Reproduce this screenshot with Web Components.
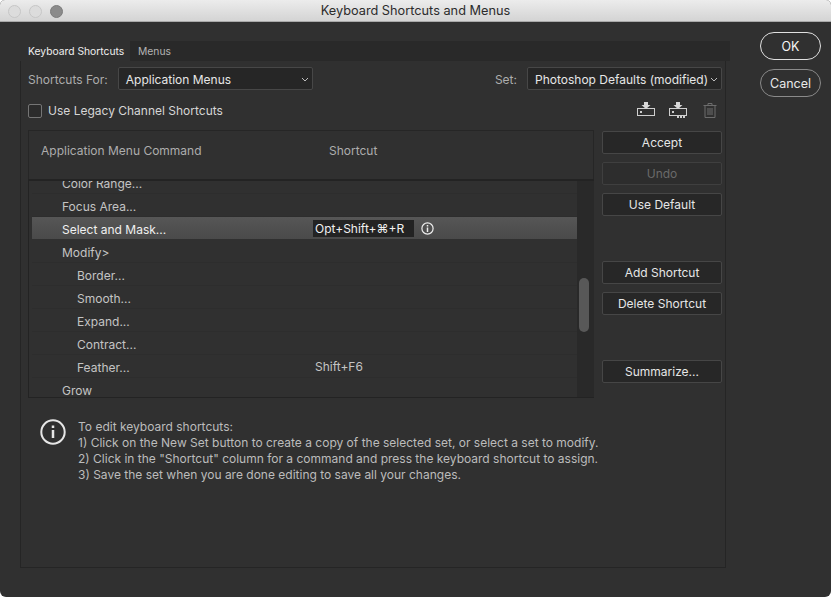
<!DOCTYPE html>
<html>
<head>
<meta charset="utf-8">
<title>Keyboard Shortcuts and Menus</title>
<style>
html, body { margin: 0; height: 100%; background: #fff; }
body { font: 12px Inter, "Liberation Sans", "Noto Sans", sans-serif; overflow: hidden; }
</style>
</head>
<body>
<ps-window heading="Keyboard Shortcuts and Menus">
  <ps-panel>
    <ps-tabs slot="tabs"></ps-tabs>
    <div slot="top">
      <ps-select label="Shortcuts For:" value="Application Menus" width="195"></ps-select>
      <ps-select label="Set:" value="Photoshop Defaults (modified)" width="195"></ps-select>
    </div>
    <ps-checkbox slot="legacy">Use Legacy Channel Shortcuts</ps-checkbox>
    <ps-toolicons slot="legacy"></ps-toolicons>
    <shortcut-table slot="table">
      <shortcut-row>Color Range...</shortcut-row>
      <shortcut-row>Focus Area...</shortcut-row>
      <shortcut-row selected keys="Opt+Shift+⌘+R">Select and Mask...</shortcut-row>
      <shortcut-row>Modify&gt;</shortcut-row>
      <shortcut-row indent>Border...</shortcut-row>
      <shortcut-row indent>Smooth...</shortcut-row>
      <shortcut-row indent>Expand...</shortcut-row>
      <shortcut-row indent>Contract...</shortcut-row>
      <shortcut-row indent keys="Shift+F6">Feather...</shortcut-row>
      <shortcut-row>Grow</shortcut-row>
    </shortcut-table>
    <ps-button slot="side">Accept</ps-button>
    <ps-button slot="side" disabled>Undo</ps-button>
    <ps-button slot="side">Use Default</ps-button>
    <ps-button slot="side" style="margin-top:37px">Add Shortcut</ps-button>
    <ps-button slot="side">Delete Shortcut</ps-button>
    <ps-button slot="side" style="margin-top:37px">Summarize...</ps-button>
    <info-note slot="note">
      <div>To edit keyboard shortcuts:</div>
      <div>1) Click on the New Set button to create a copy of the selected set, or select a set to modify.</div>
      <div>2) Click in the "Shortcut" column for a command and press the keyboard shortcut to assign.</div>
      <div>3) Save the set when you are done editing to save all your changes.</div>
    </info-note>
  </ps-panel>
  <ps-pill slot="actions" primary>OK</ps-pill>
  <ps-pill slot="actions">Cancel</ps-pill>
</ps-window>

<script>
function define(name, css, html, init) {
  customElements.define(name, class extends HTMLElement {
    constructor() {
      super();
      this.attachShadow({ mode: 'open' }).innerHTML = `<style>${css}</style>${html}`;
    }
    connectedCallback() {
      if (init) init(this, this.shadowRoot);
    }
  });
}

define('ps-window', `
  :host { display: flex; flex-direction: column; width: 831px; height: 597px; background: #303030;
    border-radius: 5px 5px 6px 6px; overflow: hidden; }
  .bar { flex: none; height: 21px; display: flex; align-items: center; position: relative; justify-content: center;
    background: linear-gradient(#ececec, #d4d4d4); border-bottom: 1px solid #a9a9a9; color: #2c2c2c; font-size: 12.75px; }
  .lights { position: absolute; left: 8px; top: 5px; display: flex; gap: 8px; }
  .lights i { width: 11px; height: 11px; border-radius: 50%; background: #dcdcdc; border: .5px solid #c6c6c6; }
  .lights i:last-child { background: #8b8b8b; border-color: #7c7c7c; }
  .body { flex: 1; display: flex; padding: 10px 10px 0 20px; }
  .actions { display: flex; flex-direction: column; gap: 9px; margin: 0 0 0 30px; width: 61px; }
`, `
  <div class="bar"><div class="lights"><i></i><i></i><i></i></div><span id="t"></span></div>
  <div class="body"><slot></slot><div class="actions"><slot name="actions"></slot></div></div>
`, (el, root) => { root.getElementById('t').textContent = el.getAttribute('heading'); });

define('ps-panel', `
  :host { display: block; width: 710px; height: 535px; margin-top: 9px; }
  .frame { width: 706px; height: 507px; border: solid #252525; border-width: 0 1px 1px 1px; padding: 6px 0 0 7px; box-sizing: border-box; }
  .top ::slotted(div) { display: flex; justify-content: space-between; padding: 0 3px 0 0; }
  .legacy { display: flex; justify-content: space-between; align-items: center; height: 23px; margin-top: 9px; padding-right: 3px; }
  .main { display: flex; gap: 8px; margin-top: 8px; }
  .side { width: 120px; display: flex; flex-direction: column; gap: 8px; padding-top: 1px; }
  .note { margin-top: 21px; }
`, `
  <slot name="tabs"></slot>
  <div class="frame">
    <div class="top"><slot name="top"></slot></div>
    <div class="legacy"><slot name="legacy"></slot></div>
    <div class="main"><slot name="table"></slot><div class="side"><slot name="side"></slot></div></div>
    <div class="note"><slot name="note"></slot></div>
  </div>
`);

define('ps-tabs', `
  :host { display: flex; height: 20px; background: #292929; font-size: 10.3px; line-height: 20px; white-space: nowrap; }
  span { padding: 0 8px; color: #b4b4b4; }
  .on { width: 110px; box-sizing: border-box; background: #303030; color: #eee; }
`, `<span class="on">Keyboard Shortcuts</span><span>Menus</span>`);

define('ps-select', `
  :host { display: flex; align-items: center; gap: 10px; color: #adadad; }
  .box { box-sizing: border-box; height: 23px; display: flex; align-items: center; justify-content: space-between;
    background: #262626; border: 1px solid #474747; border-radius: 2px; padding: 1px 3px 0 7px; color: #e6e6e6; white-space: nowrap; }
  #l { padding-top: 1px; }
  svg { width: 8px; height: 5px; flex: none; }
`, `
  <span id="l"></span>
  <div class="box" id="b"><span id="v"></span><svg viewBox="0 0 8 5"><path d="M1 1l3 3 3-3" fill="none" stroke="#bdbdbd" stroke-width="1"/></svg></div>
`, (el, root) => {
  root.getElementById('l').textContent = el.getAttribute('label');
  root.getElementById('v').textContent = el.getAttribute('value');
  root.getElementById('b').style.width = el.getAttribute('width') + 'px';
});

define('ps-checkbox', `
  :host { display: flex; align-items: center; gap: 6px; color: #d6d6d6; }
  i { width: 12px; height: 12px; border: 1px solid #757575; border-radius: 2px; background: #2b2b2b; }
`, `<i></i><slot></slot>`);

define('ps-toolicons', `
  :host { display: flex; align-items: center; gap: 14px; padding-right: 5px; margin-top: -1px; }
  svg { display: block; }
  svg:last-child { margin-left: 2px; }
`, `
  <svg width="18" height="16" viewBox="0 0 18 16" fill="none"><path d="M7 0h4v3h2.500l-4.500 4-4.500-4H7z" fill="#d8d8d8"/><rect x=".5" y="6.500" width="17" height="7" stroke="#cfcfcf"/><rect x="3" y="9" width="2" height="2" fill="#cfcfcf"/></svg>
  <svg width="18" height="16" viewBox="0 0 18 16" fill="none"><path d="M7 0h4v3h2.500l-4.500 4-4.500-4H7z" fill="#d8d8d8"/><rect x=".5" y="6.500" width="17" height="7" stroke="#cfcfcf"/><rect x="3" y="9" width="2" height="2" fill="#cfcfcf"/><path d="M8 15h2m1 0h2m1 0h2" stroke="#cfcfcf" stroke-width="2"/></svg>
  <svg width="14" height="15" viewBox="0 0 14 15" fill="none" stroke="#6c6c6c"><path d="M.5 2.500h13M5 2.500v-2h4v2M2 2.500v12h10v-12M5 5v7M7 5v7M9 5v7"/></svg>
`);

define('shortcut-table', `
  :host { display: block; width: 566px; }
  .head { box-sizing: border-box; height: 49px; display: flex; align-items: center; padding-bottom: 9px; border: 1px solid #262626; border-bottom: 0; color: #adadad; }
  .head span:first-child { width: 288px; padding-left: 12px; box-sizing: content-box; }
  .wrap { display: flex; height: 219px; border: 1px solid #232323; border-width: 2px 0 1px 1px; box-sizing: border-box; overflow: hidden; }
  .rows { flex: 1; padding-left: 3px; overflow: hidden; }
  .inner { margin-top: -10px; }
  .track { width: 17px; background: #292929; position: relative; }
  .thumb { position: absolute; left: 2px; top: 97px; width: 10px; height: 54px; border-radius: 5px; background: #585858; }
`, `
  <div class="head"><span>Application Menu Command</span><span>Shortcut</span></div>
  <div class="wrap">
    <div class="rows"><div class="inner"><slot></slot></div></div>
    <div class="track"><div class="thumb"></div></div>
  </div>
`);

define('shortcut-row', `
  :host { display: flex; box-sizing: border-box; align-items: center; height: 23px; color: #c4c4c4;
    border-bottom: 1px solid #2d2d2d; padding: 3px 0 0 30px; }
  :host([indent]) { padding-left: 45px; }
  :host([selected]) { background: linear-gradient(#565656, #4a4a4a) padding-box; color: #f0f0f0; border-bottom-color: transparent; }
  .name { flex: none; width: 253px; }
  :host([indent]) .name { width: 238px; }
  .keys { margin: -3px 0 0 -2px; display: flex; align-items: center; gap: 7px; }
  .keys b { font-weight: 400; display: block; line-height: 17px; padding: 0 1px 0 2px; }
  :host([selected]) .keys b { width: 98px; background: #232323; }
  svg { display: none; }
  :host([selected]) svg { display: block; }
`, `
  <span class="name"><slot></slot></span>
  <span class="keys"><b id="k"></b><svg width="13" height="13" viewBox="0 0 13 13" fill="none" stroke="#eee" stroke-width="1.200"><circle cx="6.500" cy="6.500" r="5.600"/><path d="M6.500 5.500v4.500" stroke-width="1.500"/><path d="M6.500 3v1.500" stroke-width="1.500"/></svg></span>
`, (el, root) => {
  const k = el.getAttribute('keys');
  if (k) root.getElementById('k').textContent = k;
  else root.querySelector('.keys').style.display = 'none';
});

define('ps-button', `
  :host { display: flex; box-sizing: border-box; height: 23px; align-items: center; justify-content: center;
    background: #272727; border: 1px solid #464646; border-radius: 2px; color: #e6e6e6; }
  :host([disabled]) { color: #6a6a6a; background: #2d2d2d; border-color: #3f3f3f; }
`, `<slot></slot>`);

define('ps-pill', `
  :host { display: flex; box-sizing: border-box; height: 28px; align-items: center; justify-content: center;
    border: 1px solid #8a8a8a; border-radius: 14px; color: #e8e8e8; font-size: 12.5px; }
  :host([primary]) { border-color: #e0e0e0; color: #f5f5f5; }
`, `<slot></slot>`);

define('info-note', `
  :host { display: flex; gap: 12px; padding-left: 12px; color: #bcbcbc; line-height: 16px; }
  svg { flex: none; }
`, `
  <svg width="26" height="26" viewBox="0 0 26 26" fill="none" stroke="#e6e6e6"><circle cx="13" cy="13" r="11.700" stroke-width="2"/><path d="M13 11v8" stroke-width="2.500"/><path d="M13 6.500v2.500" stroke-width="2.500"/></svg>
  <div><slot></slot></div>
`);
</script>
</body>
</html>
